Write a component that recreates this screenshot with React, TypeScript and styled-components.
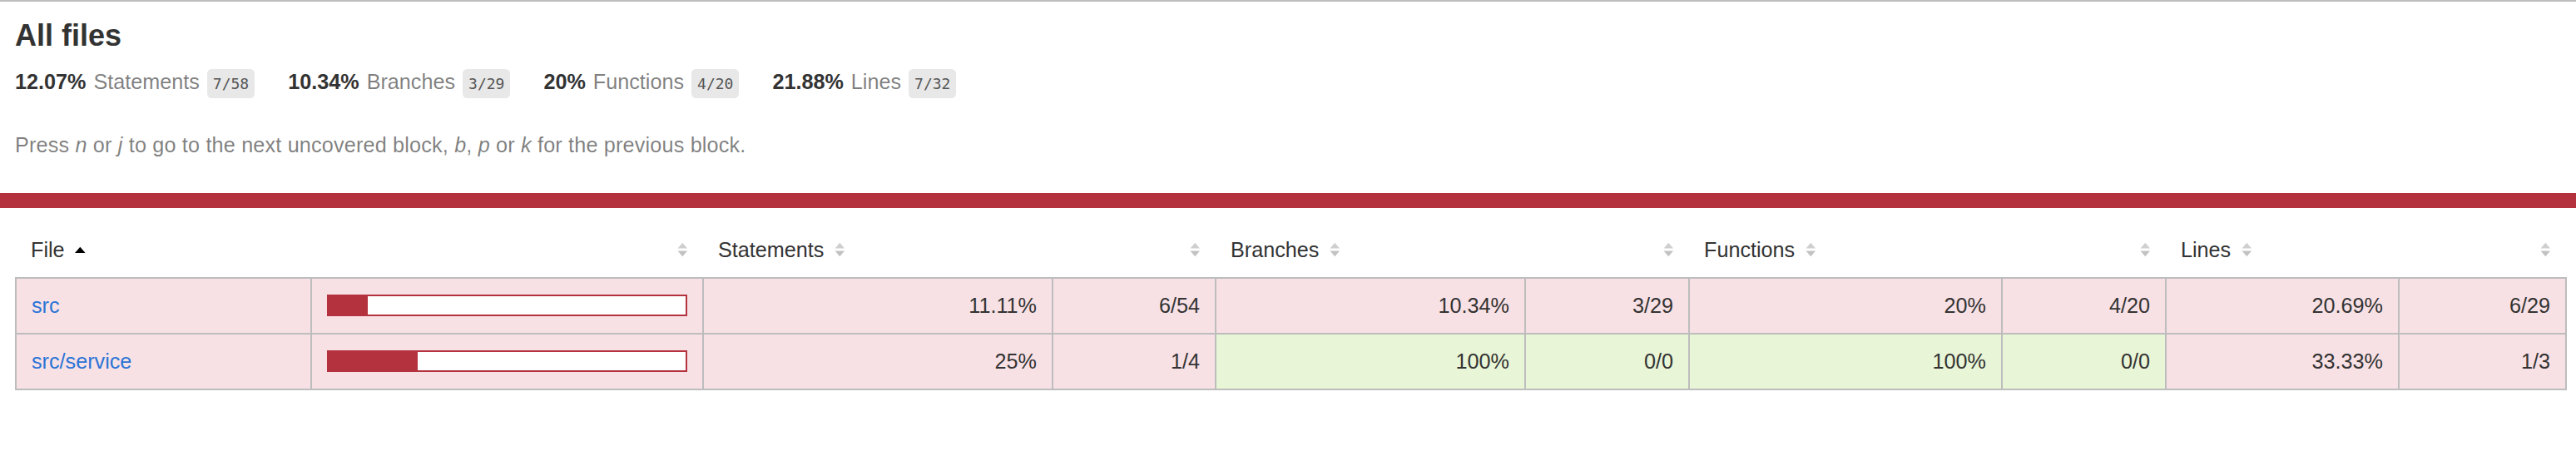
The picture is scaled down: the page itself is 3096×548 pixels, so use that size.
import React from 'react';
import styled, { createGlobalStyle } from 'styled-components';

type Level = 'low' | 'medium' | 'high';

const RED = '#b4323e';
const BORDER = '#bdbdbd';

const levelBg: Record<Level, string> = {
  low: '#f8e1e5',
  medium: '#fff4c2',
  high: '#e8f5d6',
};

const levelStrong: Record<Level, string> = {
  low: RED,
  medium: '#f9cd0b',
  high: 'rgb(77,146,33)',
};

const GlobalStyle = createGlobalStyle`
  *, *::before, *::after { box-sizing: border-box; }
  html, body { margin: 0; padding: 0; background: #fff; }
  body {
    font-family: "Liberation Sans", Arial, Helvetica, sans-serif;
    font-size: 25.2px;
    color: #333;
  }
`;

const Page = styled.div`
  border-top: 2px solid ${BORDER};
`;

const Summary = styled.div`
  padding: 18px;
`;

const Title = styled.h1`
  margin: 0;
  font-size: 36px;
  line-height: 46px;
  font-weight: bold;
  color: #333;
`;

const Stats = styled.div`
  display: flex;
`;

const Stat = styled.div`
  padding: 18px 40px 18px 0;
  line-height: 29px;
  word-spacing: 2px;
  white-space: nowrap;
`;

const Strong = styled.span`
  font-weight: bold;
`;

const Quiet = styled.span`
  color: rgba(0, 0, 0, 0.5);
`;

const Fraction = styled.span`
  font-family: "DejaVu Sans Mono", Menlo, "Liberation Mono", monospace;
  font-size: 18px;
  color: #555;
  background: #e8e8e8;
  padding: 7.2px 7px;
  border-radius: 5.4px;
  vertical-align: middle;
`;

const Hint = styled.p`
  margin: 27px 0 25px;
  line-height: 29px;
  letter-spacing: 0.18px;
  color: rgba(0, 0, 0, 0.5);
`;

const StatusLine = styled.div<{ $level: Level }>`
  height: 18px;
  background: ${(p) => levelStrong[p.$level]};
`;

const TableWrap = styled.div`
  padding: 18px 13px 18px 18px;
`;

const Table = styled.table`
  border-collapse: collapse;
  width: 100%;
  table-layout: fixed;
`;

const HeadRow = styled.tr`
  border-bottom: 2px solid ${BORDER};
`;

const Th = styled.th<{ $right?: boolean }>`
  padding: 18px;
  line-height: 29px;
  font-weight: normal;
  white-space: nowrap;
  color: #333;
  text-align: ${(p) => (p.$right ? 'right' : 'left')};
`;

const Body = styled.tbody`
  border: 2px solid ${BORDER};
`;

const Row = styled.tr`
  border-bottom: 2px solid ${BORDER};
`;

const Td = styled.td<{ $level: Level; $right?: boolean }>`
  padding: 18px;
  line-height: 29px;
  white-space: nowrap;
  background: ${(p) => levelBg[p.$level]};
  text-align: ${(p) => (p.$right ? 'right' : 'left')};
  border-right: 2px solid ${BORDER};
  &:last-child {
    border-right: none;
  }
`;

const FileLink = styled.a`
  color: #2a74d6;
  text-decoration: none;
`;

const Chart = styled.div<{ $level: Level }>`
  display: flex;
  height: 26px;
  line-height: 0;
  border: 2px solid ${(p) => levelStrong[p.$level]};
`;

const CoverFill = styled.div<{ $level: Level }>`
  height: 100%;
  background: ${(p) => levelStrong[p.$level]};
`;

const CoverEmpty = styled.div`
  height: 100%;
  background: #fff;
`;

const SorterSvg = styled.svg`
  display: inline-block;
  width: 12.6px;
  height: 18px;
  margin-left: 12.6px;
  vertical-align: baseline;
`;

const Sorter: React.FC<{ state?: 'none' | 'asc' }> = ({ state = 'none' }) => (
  <SorterSvg viewBox="0 0 7 10" aria-hidden="true">
    {state === 'asc' ? (
      <polygon points="0,7.2 3.5,3.2 7,7.2" fill="#000" />
    ) : (
      <>
        <polygon points="0.3,4.2 3.5,0.4 6.7,4.2" fill="#cfcfcf" />
        <polygon points="0.3,5.8 3.5,9.6 6.7,5.8" fill="#c2c2c2" />
      </>
    )}
  </SorterSvg>
);

type Metric = { pct: string; abs: string; level: Level };
type FileRow = { file: string; level: Level; cover: number; metrics: Metric[] };

const totals = [
  { pct: '12.07%', label: 'Statements', frac: '7/58' },
  { pct: '10.34%', label: 'Branches', frac: '3/29' },
  { pct: '20%', label: 'Functions', frac: '4/20' },
  { pct: '21.88%', label: 'Lines', frac: '7/32' },
];

const rows: FileRow[] = [
  {
    file: 'src',
    level: 'low',
    cover: 11.11,
    metrics: [
      { pct: '11.11%', abs: '6/54', level: 'low' },
      { pct: '10.34%', abs: '3/29', level: 'low' },
      { pct: '20%', abs: '4/20', level: 'low' },
      { pct: '20.69%', abs: '6/29', level: 'low' },
    ],
  },
  {
    file: 'src/service',
    level: 'low',
    cover: 25,
    metrics: [
      { pct: '25%', abs: '1/4', level: 'low' },
      { pct: '100%', abs: '0/0', level: 'high' },
      { pct: '100%', abs: '0/0', level: 'high' },
      { pct: '33.33%', abs: '1/3', level: 'low' },
    ],
  },
];

const colWidths = [355, 471, 420, 196, 372, 197, 376, 197, 280, 201];
const metricNames = ['Statements', 'Branches', 'Functions', 'Lines'];

export default function App() {
  return (
    <Page>
      <GlobalStyle />
      <Summary>
        <Title>All files</Title>
        <Stats>
          {totals.map((t) => (
            <Stat key={t.label}>
              <Strong>{t.pct} </Strong>
              <Quiet>{t.label}</Quiet> <Fraction>{t.frac}</Fraction>
            </Stat>
          ))}
        </Stats>
        <Hint>
          Press <em>n</em> or <em>j</em> to go to the next uncovered block, <em>b</em>,{' '}
          <em>p</em> or <em>k</em> for the previous block.
        </Hint>
      </Summary>
      <StatusLine $level="low" />
      <TableWrap>
        <Table>
          <colgroup>
            {colWidths.map((w, i) => (
              <col key={i} style={{ width: w }} />
            ))}
          </colgroup>
          <thead>
            <HeadRow>
              <Th>
                File
                <Sorter state="asc" />
              </Th>
              <Th $right>
                <Sorter />
              </Th>
              {metricNames.map((m) => (
                <React.Fragment key={m}>
                  <Th>
                    {m}
                    <Sorter />
                  </Th>
                  <Th $right>
                    <Sorter />
                  </Th>
                </React.Fragment>
              ))}
            </HeadRow>
          </thead>
          <Body>
            {rows.map((r) => {
              const fill = Math.floor(r.cover);
              return (
                <Row key={r.file}>
                  <Td $level={r.level}>
                    <FileLink href="#">{r.file}</FileLink>
                  </Td>
                  <Td $level={r.level}>
                    <Chart $level={r.level}>
                      <CoverFill $level={r.level} style={{ width: `${fill}%` }} />
                      <CoverEmpty style={{ width: `${100 - fill}%` }} />
                    </Chart>
                  </Td>
                  {r.metrics.map((m, i) => (
                    <React.Fragment key={i}>
                      <Td $level={m.level} $right>
                        {m.pct}
                      </Td>
                      <Td $level={m.level} $right>
                        {m.abs}
                      </Td>
                    </React.Fragment>
                  ))}
                </Row>
              );
            })}
          </Body>
        </Table>
      </TableWrap>
    </Page>
  );
}
